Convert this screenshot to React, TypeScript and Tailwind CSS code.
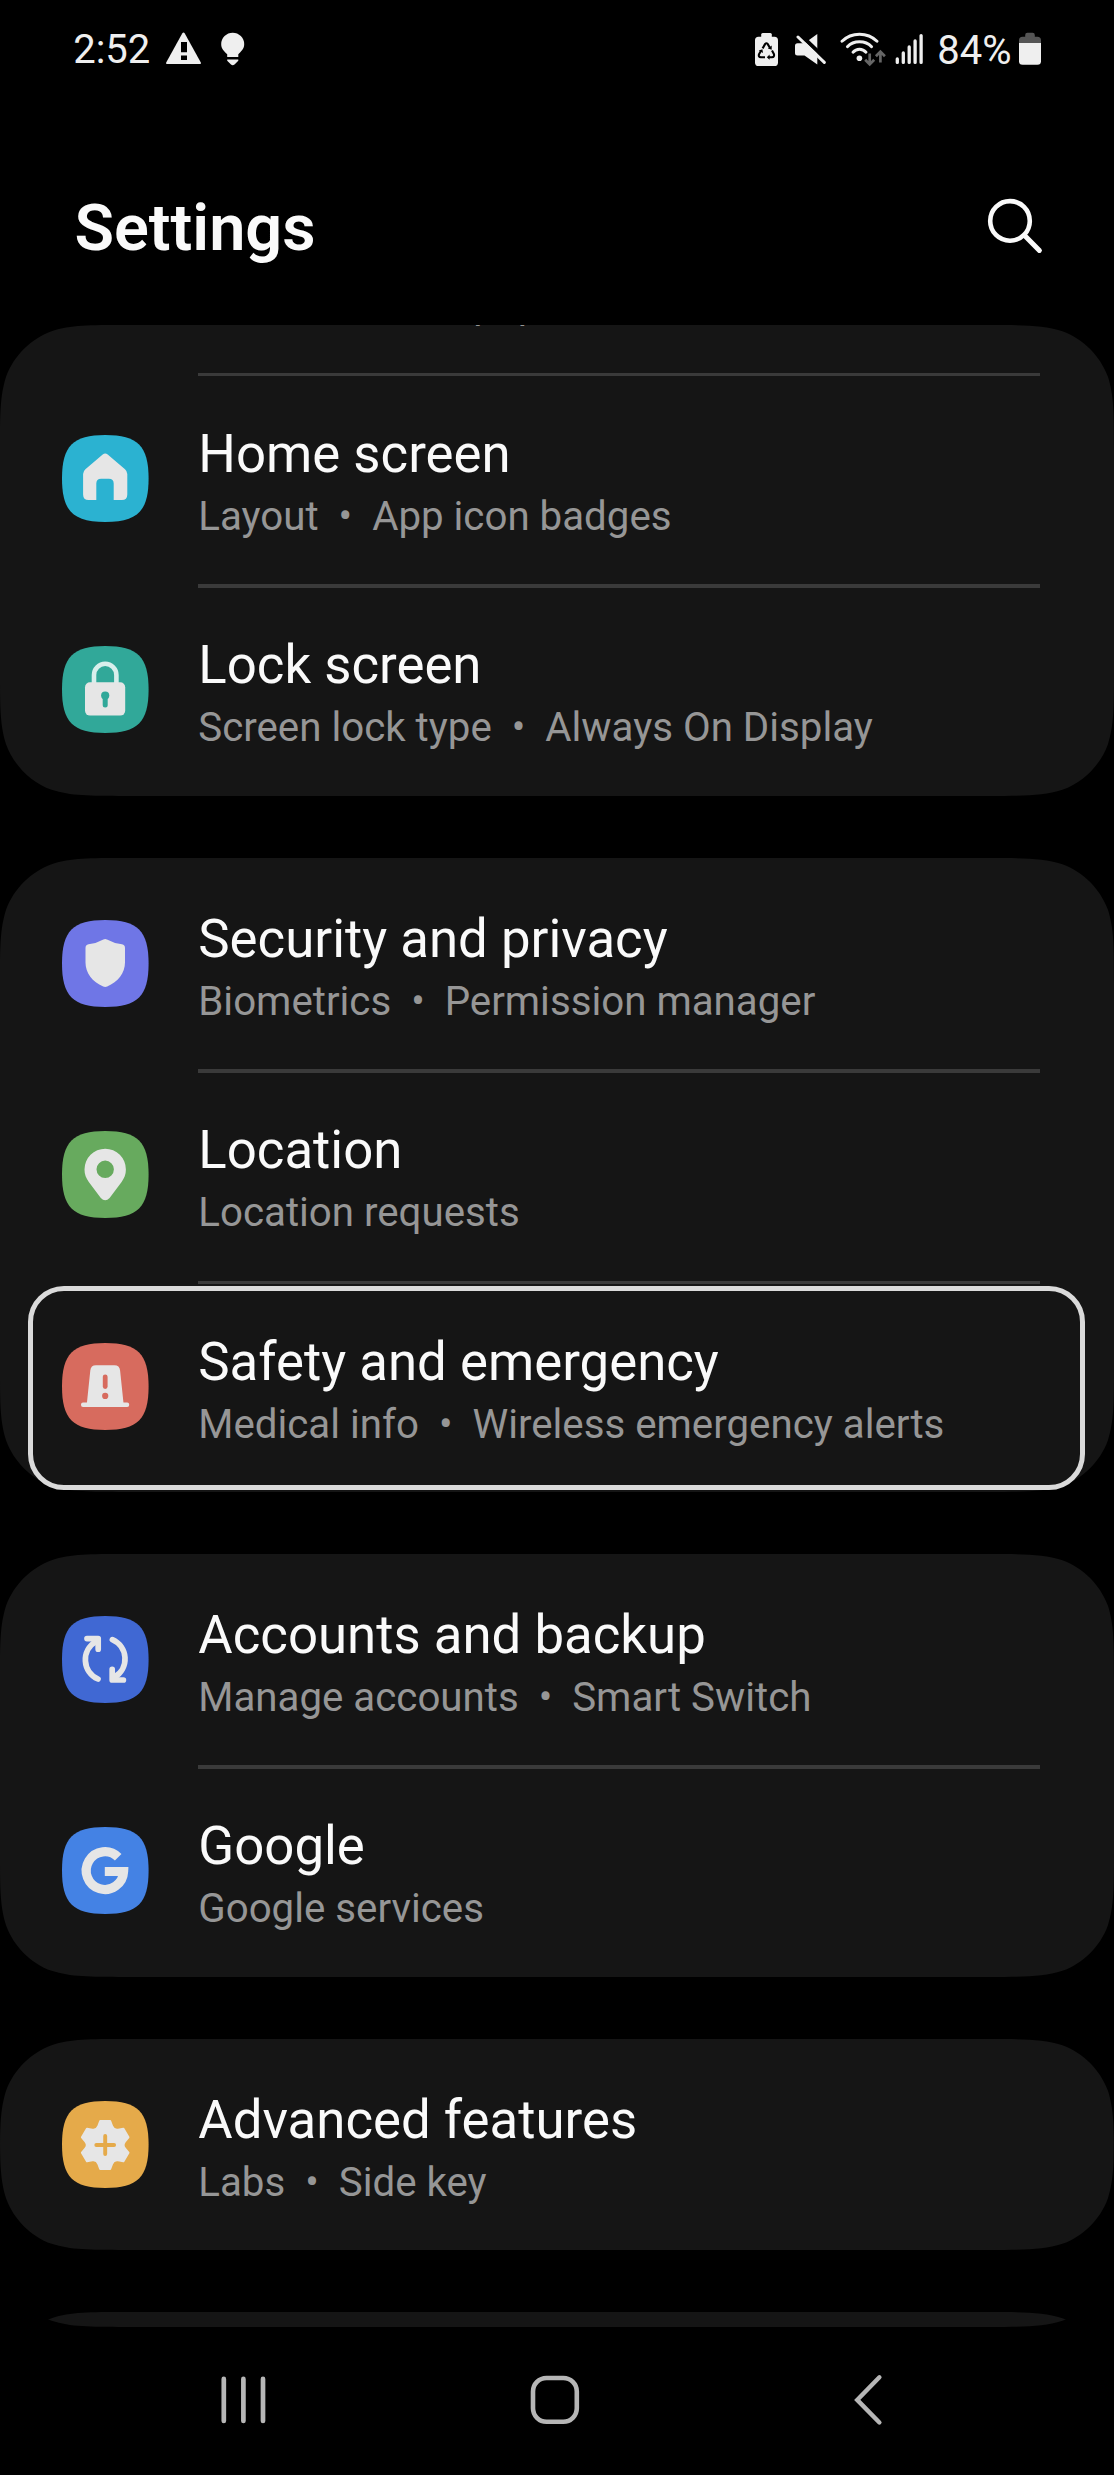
import type { ReactNode } from "react";

const FG = "#e6e6e6";

type Item = {
  title: string;
  parts: string[];
  color: string;
  icon: ReactNode;
  focused?: boolean;
};

/* Outline of a six-tooth gear centred on (43.2, 44) */
function buildGear(): string {
  const rot = (x: number, y: number, deg: number) => {
    const a = (deg * Math.PI) / 180;
    const px = 43.2 + x * Math.cos(a) - y * Math.sin(a);
    const py = 44 + x * Math.sin(a) + y * Math.cos(a);
    return `${px.toFixed(2)} ${py.toFixed(2)}`;
  };
  let d = `M${rot(-6.9, -18.8, 0)}`;
  for (let a = 0; a < 360; a += 60) {
    d += `L${rot(-5, -24, a)}L${rot(5, -24, a)}L${rot(6.9, -18.8, a)}`;
    d += `Q${rot(8.5, -14.7, a)} ${rot(-6.9, -18.8, a + 60)}`;
  }
  return d + "Z";
}

const HomeIcon = (
  <path
    fill={FG}
    d="M40.7 19.6Q43.2 17.6 45.7 19.6L63 34.2Q65.3 36.2 65.3 39V59.5Q65.3 65 59.8 65H51.7V48.5Q51.7 43.7 46.9 43.7H39.1Q34.3 43.7 34.3 48.5V65H26.6Q21.1 65 21.1 59.5V39Q21.1 36.2 23.4 34.2Z"
  />
);

const LockIcon = (
  <>
    <path d="M32 38V29a11.2 11.2 0 0 1 22.4 0v9" fill="none" stroke="#d8efec" strokeWidth="4.6" />
    <rect x="23" y="36.3" width="40.2" height="33.3" rx="5" fill={FG} />
    <circle cx="43.2" cy="49.6" r="4.1" fill="#31a899" />
    <path d="M43.2 50v9" stroke="#31a899" strokeWidth="5" strokeLinecap="round" />
  </>
);

const ShieldIcon = (
  <path
    fill={FG}
    d="M41.4 19.5Q43.2 18.6 45 19.5Q51.5 23.2 60 24.3Q63 24.9 63 28V42.5C63 53 56 62 45.2 66.5Q43.2 67.4 41.2 66.5C30.4 62 23.5 53 23.5 42.5V28Q23.5 24.9 26.5 24.3Q35 23.2 41.4 19.5Z"
  />
);

const PinIcon = (
  <path
    fill={FG}
    fillRule="evenodd"
    d="M22.5 38.5A20.7 20.8 0 0 1 63.9 38.5C63.9 43.6 62.3 47 59.6 51L47.6 67Q43.2 71.6 38.8 67L26.8 51C24.1 47 22.5 43.6 22.5 38.5ZM43.2 29.6a8.7 8.7 0 1 0 0 17.4a8.7 8.7 0 0 0 0-17.4Z"
  />
);

const SirenIcon = (
  <>
    <path fill={FG} d="M34 22.3H52.4Q57.6 22.3 58.1 27.5L61.6 61H24.8L28.3 27.5Q28.8 22.3 34 22.3Z" />
    <rect x="19" y="59.6" width="48.2" height="4.5" rx="2" fill={FG} />
    <path d="M43.2 33.8V43.6" stroke="#d76b5e" strokeWidth="4.8" strokeLinecap="round" />
    <circle cx="43.2" cy="52.9" r="3.1" fill="#d76b5e" />
  </>
);

const SyncIcon = (
  <g fill="none" stroke={FG} strokeWidth="5.7" strokeLinecap="round" strokeLinejoin="round">
    <path d="M36 63A21 21 0 0 1 33.8 25.6" />
    <path d="M25 22.6H36.2V33.2" />
    <path d="M50.4 23.6A21 21 0 0 1 52.6 61" />
    <path d="M61.4 64H50.2V53.4" />
  </g>
);

const GoogleIcon = (
  <path
    d="M56.2 30.3A18.7 18.9 0 1 0 61.6 44.5H42.8"
    fill="none"
    stroke={FG}
    strokeWidth="9.2"
    strokeLinejoin="miter"
  />
);

const GearIcon = (
  <>
    <path d={buildGear()} fill={FG} stroke={FG} strokeWidth="2" strokeLinejoin="round" />
    <path
      d="M43.2 35V53M34.3 44H52.1"
      stroke="#e5aa4a"
      strokeWidth="3.9"
      strokeLinecap="round"
    />
  </>
);

const groupOne: Item[] = [
  { title: "Home screen", parts: ["Layout", "App icon badges"], color: "#2bb2d1", icon: HomeIcon },
  { title: "Lock screen", parts: ["Screen lock type", "Always On Display"], color: "#31a899", icon: LockIcon },
];
const groupTwo: Item[] = [
  { title: "Security and privacy", parts: ["Biometrics", "Permission manager"], color: "#6f76e6", icon: ShieldIcon },
  { title: "Location", parts: ["Location requests"], color: "#67aa5e", icon: PinIcon },
  {
    title: "Safety and emergency",
    parts: ["Medical info", "Wireless emergency alerts"],
    color: "#d76b5e",
    icon: SirenIcon,
    focused: true,
  },
];
const groupThree: Item[] = [
  { title: "Accounts and backup", parts: ["Manage accounts", "Smart Switch"], color: "#4068d3", icon: SyncIcon },
  { title: "Google", parts: ["Google services"], color: "#4482e4", icon: GoogleIcon },
];
const groupFour: Item[] = [
  { title: "Advanced features", parts: ["Labs", "Side key"], color: "#e5aa4a", icon: GearIcon },
];

/* Black mask that gives a card its smooth continuous corner */
function Corner({ className }: { className: string }) {
  return (
    <svg viewBox="0 0 1.528 1.528" className={`pointer-events-none absolute h-[125px] w-[125px] ${className}`}>
      <path
        d="M0 0H1.528C1.088 0 .868 0 .631 .075C.374 .169 .169 .374 .075 .631C0 .868 0 1.088 0 1.528Z"
        fill="#000"
      />
    </svg>
  );
}

function Card({ className = "", children }: { className?: string; children?: ReactNode }) {
  return (
    <section className={`relative w-full shrink-0 bg-[#151515] ${className}`}>
      <div className="absolute inset-0 overflow-hidden">
        <Corner className="top-0 left-0" />
        <Corner className="top-0 right-0 -scale-x-100" />
        <Corner className="bottom-0 left-0 -scale-y-100" />
        <Corner className="right-0 bottom-0 -scale-100" />
      </div>
      {children}
    </section>
  );
}

function Subtitle({ parts }: { parts: string[] }) {
  return (
    <p className="h-12 text-[40.25px] leading-[48px] whitespace-pre text-[#969696]">
      {parts.join("  •  ")}
    </p>
  );
}

function Row({ item, divider }: { item: Item; divider: boolean }) {
  return (
    <div className="relative flex h-[211.4px] pl-[62px]">
      <svg viewBox="0 0 86.6 87" className="mt-[62px] h-[87px] w-[86.6px] shrink-0">
        <path
          d="M0 43.5C0 11 11 0 43.3 0S86.6 11 86.6 43.5S75.6 87 43.3 87S0 76 0 43.5Z"
          fill={item.color}
        />
        {item.icon}
      </svg>
      <div className="mr-[74px] ml-[49px] flex-1">
        <div className={`h-[3.2px] ${divider ? "bg-[#3a3a3a]" : ""}`} />
        <h2 className="mt-[46.8px] ml-[0.7px] h-[62px] text-[52.75px] leading-[62px] whitespace-nowrap text-[#fafafa]">
          {item.title}
        </h2>
        <div className="mt-[8px] ml-[0.7px]">
          <Subtitle parts={item.parts} />
        </div>
      </div>
      {item.focused && (
        <div className="absolute top-[5.2px] right-[29px] left-[28px] h-[204px] rounded-[36px] border-[5px] border-[#dadada]" />
      )}
    </div>
  );
}

function Rows({ items, leadingDivider = false }: { items: Item[]; leadingDivider?: boolean }) {
  return (
    <>
      {items.map((item, i) => (
        <Row key={item.title} item={item} divider={leadingDivider || i > 0} />
      ))}
    </>
  );
}

function StatusBar() {
  return (
    <div className="flex h-[98px] shrink-0 items-start pt-[31px] pr-[73px] pl-[73.2px] text-[40px] leading-[37px] text-[#efefef]">
      <span>2:52</span>
      <svg viewBox="166 31 36 36" className="ml-[15.5px] h-9 w-9">
        <path d="M182.2 33.6Q183.5 31.6 184.8 33.6L200.8 62.4Q201.4 64 200 64H167Q165.6 64 166.2 62.4Z" fill="#efefef" />
        <path d="M181 42h6v10.3h-6zM181 55.5h6v4.4h-6z" fill="#000" />
      </svg>
      <svg viewBox="221 31 24 36" className="ml-[19px] h-9 w-6">
        <path
          d="M232.7 32.7A11.5 11.5 0 0 1 244.2 44.2C244.2 49 241 51.4 238.3 54.2V57H227.2V54.2C224.4 51.4 221.2 49 221.2 44.2A11.5 11.5 0 0 1 232.7 32.7ZM227.2 59.5H238.3V60.7L234.5 64.5Q232.7 65.8 231 64.5L227.2 60.7Z"
          fill="#efefef"
        />
      </svg>

      <svg viewBox="755 31 24 36" className="ml-auto h-9 w-6">
        <rect x="755" y="36.7" width="23" height="29.3" rx="3.6" fill="#efefef" />
        <rect x="761.2" y="33" width="10.6" height="6" rx="1.5" fill="#efefef" />
        <g fill="none" stroke="#000" strokeWidth="2.1" strokeLinejoin="round">
          <path d="M762.6 48.4L765.2 43.9Q766.4 42.6 767.6 43.9L770 48" />
          <path d="M772 50.6L774 54.3Q774.6 57 772 57.2H768.6" />
          <path d="M765 57.2H760.8Q758.2 57 759 54.3L761 50.8" />
        </g>
        <path d="M771.7 45.6V49.8L767.9 48.6ZM769.6 54.6V59.8L766.8 57.2ZM758.8 50.6L762.4 49.2L763 53Z" fill="#000" />
      </svg>
      <svg viewBox="795 31 31 36" className="ml-[16px] h-9 w-[31px]">
        <path
          d="M797.5 43.3H804.5L817.3 34V64.5L804.5 55.4H797.5Q795 55.4 795 52.9V45.8Q795 43.3 797.5 43.3Z"
          fill="#efefef"
        />
        <path d="M798.5 33L827.5 60.6" stroke="#000" strokeWidth="4" />
        <path d="M798 37L824.3 62.4" stroke="#efefef" strokeWidth="3" strokeLinecap="round" />
      </svg>
      <svg viewBox="840 31 46 36" className="ml-[14px] h-9 w-[46px]">
        <g fill="none" stroke="#efefef" strokeWidth="2.9" strokeLinecap="round">
          <path d="M842 41.2Q849.2 34.2 859.5 34.2T877 41.2" />
          <path d="M847.4 46.8Q852 41.8 859.5 41.8T871.6 46.8" />
          <path d="M853 52.2Q855.6 49.2 859.5 49.2T866 52.2" />
        </g>
        <circle cx="859.4" cy="58.3" r="2.8" fill="#efefef" />
        <g fill="none" stroke="#666" strokeWidth="2.7">
          <path d="M869.7 53.4V64M865.2 59.8L869.7 64.4L874.2 59.8" />
          <path d="M880.4 62.6V52M875.9 56.2L880.4 51.6L884.9 56.2" />
        </g>
      </svg>
      <svg viewBox="895 31 28 36" className="ml-[9px] h-9 w-7">
        <path
          d="M897.3 59V62.4M903.3 53V62.4M909.2 47V62.4M915.1 41V62.4M921.1 35.6V62.4"
          stroke="#efefef"
          strokeWidth="3.3"
          strokeLinecap="round"
        />
      </svg>
      <span className="mt-[0.6px] ml-[14.5px]">84%</span>
      <svg viewBox="1019 31 22 36" className="ml-[7.4px] h-9 w-[22px]">
        <path
          d="M1025.2 36.7V35Q1025.2 32.8 1027.4 32.8H1032.6Q1034.8 32.8 1034.8 35V36.7H1037.4Q1041 36.7 1041 40.3V44H1019V40.3Q1019 36.7 1022.6 36.7Z"
          fill="#555"
        />
        <path d="M1019 43H1041V61.2Q1041 64.8 1037.4 64.8H1022.6Q1019 64.8 1019 61.2Z" fill="#efefef" />
      </svg>
    </div>
  );
}

export default function App() {
  return (
    <main className="flex h-[2475px] w-[1114px] flex-col overflow-hidden bg-black font-[Roboto,sans-serif] font-normal">
      <StatusBar />

      <header className="flex h-[227px] shrink-0 items-start justify-between pr-[70px] pl-[74.4px]">
        <h1 className="mt-[92px] text-[64.8px] leading-[76px] font-semibold text-[#fafafa]">Settings</h1>
        <svg viewBox="984 194 60 60" className="mt-[96px] h-[60px] w-[60px]">
          <circle cx="1010" cy="220.9" r="19.8" fill="none" stroke="#fafafa" strokeWidth="4.6" />
          <path d="M1024.6 235.4L1039.4 250.4" stroke="#fafafa" strokeWidth="5" strokeLinecap="round" />
        </svg>
      </header>

      <Card className="h-[471px]">
        <div className="relative flex h-[48px] items-start overflow-hidden pl-[198.3px]">
          <div className="-mt-[43.6px]">
            <Subtitle parts={["Themes", "Wallpapers", "Icons"]} />
          </div>
        </div>
        <Rows items={groupOne} leadingDivider />
      </Card>
      <Card className="mt-[62px] h-[634px]">
        <Rows items={groupTwo} />
      </Card>
      <Card className="mt-[62px] h-[423px]">
        <Rows items={groupThree} />
      </Card>
      <Card className="mt-[62px] h-[211px]">
        <Rows items={groupFour} />
      </Card>
      <Card className="mt-[62px] h-[14.6px]" />

      <nav className="mt-[45px] flex h-[56px] shrink-0 items-center pl-[218px]">
        <svg viewBox="218 2372 50 56" className="h-[56px] w-[50px]">
          <path
            d="M223.8 2378.9V2421M243.4 2378.9V2421M263 2378.9V2421"
            stroke="#b6b6b6"
            strokeWidth="4.7"
            strokeLinecap="round"
          />
        </svg>
        <svg viewBox="526 2372 58 56" className="ml-[258px] h-[56px] w-[58px]">
          <rect x="533" y="2378" width="43.8" height="43.8" rx="13.5" fill="none" stroke="#b6b6b6" strokeWidth="4.6" />
        </svg>
        <svg viewBox="850 2372 36 56" className="ml-[266px] h-[56px] w-[36px]">
          <path
            d="M879.4 2377.3L857.2 2399.9L879.4 2422.5"
            fill="none"
            stroke="#b6b6b6"
            strokeWidth="4.4"
            strokeLinecap="round"
          />
        </svg>
      </nav>
    </main>
  );
}
